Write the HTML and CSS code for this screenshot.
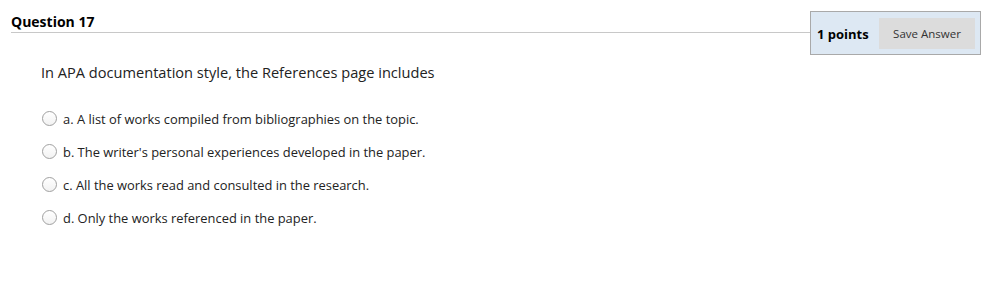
FILE: index.html
```html
<!DOCTYPE html>
<html lang="en">
<head>
  <meta charset="UTF-8">
  <title>Question 17</title>
  <link rel="stylesheet" href="styles.css">
</head>
<body>

  <!-- Question header -->
  <div class="q-header">
    <h3 class="q-title">Question 17</h3>
    <div class="q-points">
      <span class="points">1 points</span>
      <button class="save-btn">Save Answer</button>
    </div>
  </div>

  <!-- Question body -->
  <div class="q-body">
    <p class="q-text">In APA documentation style, the References page includes</p>
    <ul class="answers">
      <li><span class="radio"></span>a. A list of works compiled from bibliographies on the topic.</li>
      <li><span class="radio"></span>b. The writer's personal experiences developed in the paper.</li>
      <li><span class="radio"></span>c. All the works read and consulted in the research.</li>
      <li><span class="radio"></span>d. Only the works referenced in the paper.</li>
    </ul>
  </div>

</body>
</html>
```

FILE: styles.css
```css
body {
  margin: 0;
  font-family: "Open Sans", Arial, sans-serif;
  color: #000;
  background: #fff;
}

/* Header */
.q-header {
  display: flex;
  align-items: flex-start;
  padding: 11px 17px 0 11px;
}

.q-title {
  flex: 1;
  margin: 0;
  height: 21px;
  line-height: 22px;
  font-size: 14px;
  font-weight: bold;
  border-bottom: 1px solid #c8c8c8;
}

.q-points {
  display: flex;
  align-items: center;
  width: 158px;
  height: 31px;
  padding: 6px 5px 5px 6px;
  background: #dde8f3;
  border: 1px solid #a9a9a9;
}

.points {
  flex: 1;
  font-size: 13px;
  font-weight: bold;
}

.save-btn {
  width: 96px;
  height: 31px;
  padding: 0;
  border: none;
  background: #dcdcdc;
  color: #333;
  font-family: "Open Sans", Arial, sans-serif;
  font-size: 11.5px;
}

/* Body */
.q-body {
  padding-left: 41px;
}

.q-text {
  margin: 7px 0 21px;
  font-size: 14.6px;
  color: #222;
}

.answers {
  list-style: none;
  margin: 0;
  padding: 0;
}

.answers li {
  display: flex;
  align-items: center;
  gap: 6px;
  height: 33px;
  margin-top: -1px;
  margin-bottom: 1px;
  font-size: 12.9px;
  color: #222;
}

.radio {
  width: 13px;
  height: 13px;
  margin-left: 1px;
  border: 1px solid #a0a0a0;
  border-radius: 50%;
  background: linear-gradient(#fff, #f2f2f2);
}
```
